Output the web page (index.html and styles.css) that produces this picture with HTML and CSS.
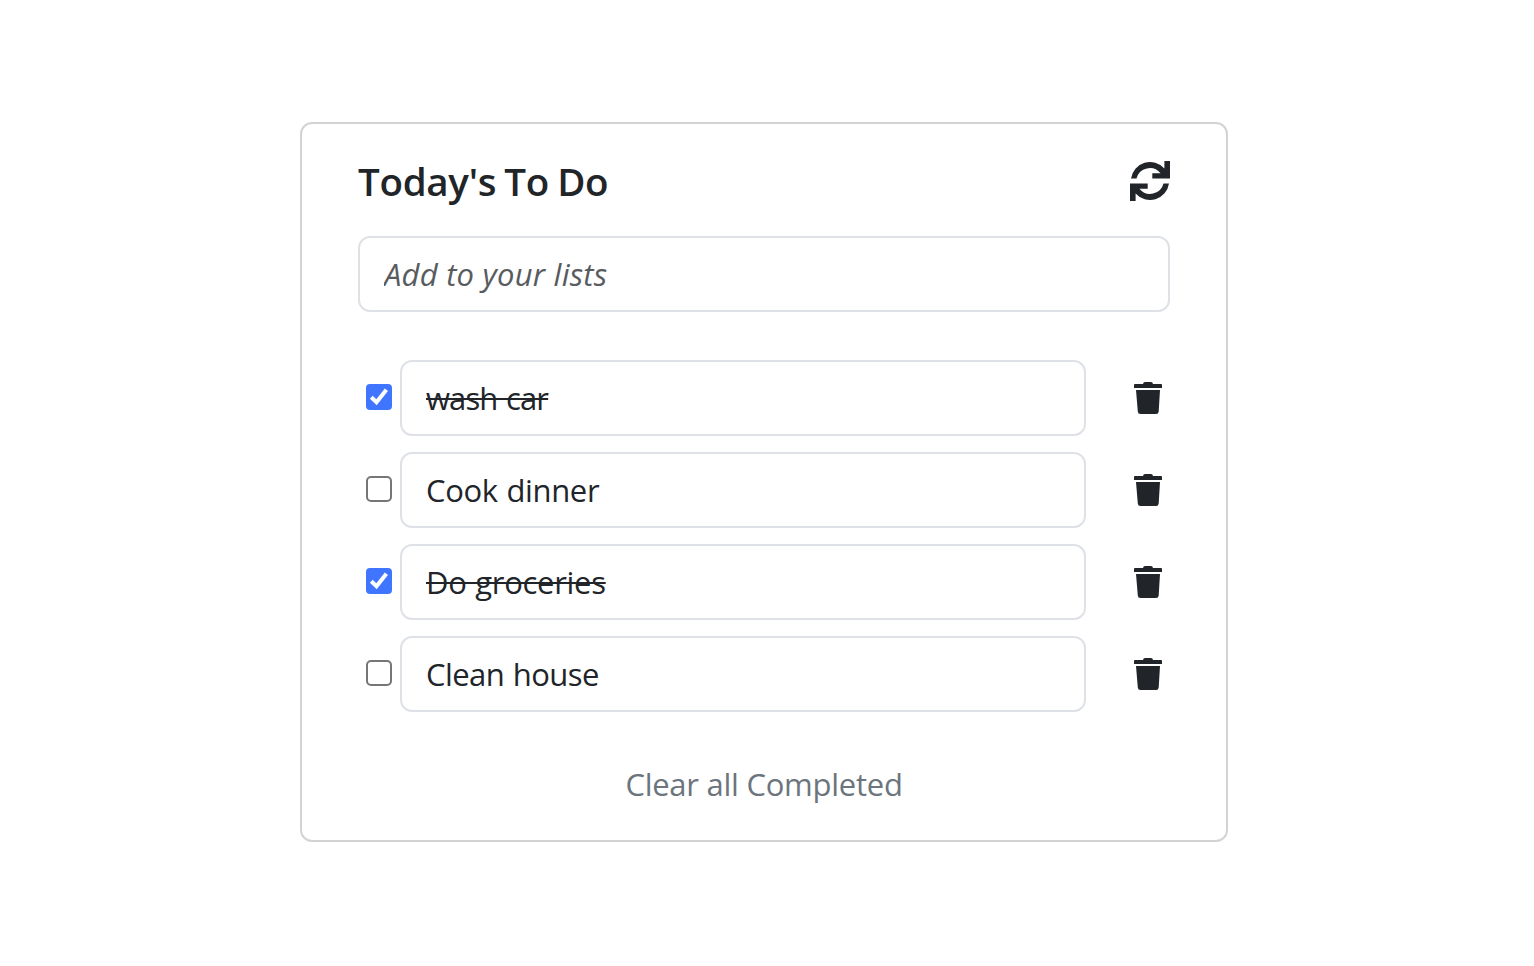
FILE: index.html
```html
<!DOCTYPE html>
<html lang="en">
<head>
<meta charset="utf-8">
<title>Today's To Do</title>
<link rel="stylesheet" href="styles.css">
</head>
<body>
<svg width="0" height="0" class="sprite" aria-hidden="true">
  <symbol id="trash" viewBox="0 0 28 32"><path d="M9 2Q9.300 0 11 0H17Q18.700 0 19 2H27Q28 2 28 3V6H0V3Q0 2 1 2ZM2 8H26L24.700 29.500Q24.500 32 22 32H6.500Q4 32 3.800 29.500Z"/></symbol>
  <symbol id="check" viewBox="0 0 26 26"><path d="M5.300 13.300L10.500 18.300L20.400 5.800"/></symbol>
</svg>
<main class="card">
  <header class="head">
    <h1 class="title">Today's To Do</h1>
    <svg class="refresh" viewBox="0 0 40 40"><path id="arrow" d="M1 17.500A19.200 19.200 0 0 1 34.400 7.500V0H40V17.500H22.300V12.300H30.500A13.700 13.700 0 0 0 6.500 17.500Z"/><use href="#arrow" transform="rotate(180 20 20)"/></svg>
  </header>
  <input class="field add" type="text" placeholder="Add to your lists">
  <ul class="list">
    <li class="row"><span class="check on"><svg><use href="#check"/></svg></span><div class="field item done"><span class="wash">wash car</span></div><svg class="trash"><use href="#trash"/></svg></li>
    <li class="row"><span class="check"></span><div class="field item"><span class="cook">Cook dinner</span></div><svg class="trash"><use href="#trash"/></svg></li>
    <li class="row"><span class="check on"><svg><use href="#check"/></svg></span><div class="field item done"><span class="groceries">Do groceries</span></div><svg class="trash"><use href="#trash"/></svg></li>
    <li class="row"><span class="check"></span><div class="field item"><span class="clean">Clean house</span></div><svg class="trash"><use href="#trash"/></svg></li>
  </ul>
  <button class="clear" type="button">Clear all Completed</button>
</main>
</body>
</html>
```
FILE: styles.css
```css
* { box-sizing: border-box; }
body { margin: 0; padding: 122px 0 0 300px; background: #fff; color: #212529; font-family: "Open Sans", "Noto Sans", sans-serif; font-size: 31px; font-weight: 400; }
.sprite { display: block; }
.card { width: 928px; height: 720px; border: 2px solid #d3d3d3; border-radius: 12px; padding: 34px 56px 0; display: flex; flex-direction: column; }
.head { display: flex; justify-content: space-between; height: 78px; }
.title { margin: 0; font-size: 38.5px; line-height: 46px; font-weight: 600; letter-spacing: -0.3px; word-spacing: -1.5px; white-space: nowrap; }
.refresh { width: 40px; height: 40px; margin-top: 3px; fill: currentColor; }
.field { height: 76px; border: 2px solid #dee2e6; border-radius: 12px; padding: 0 24px; background: #fff; }
.add { width: 812px; font: inherit; font-style: italic; letter-spacing: 0.23px; }
.add::placeholder { color: #595c5f; opacity: 1; }
.list { list-style: none; margin: 48px 0 0; padding: 0 8px; display: flex; flex-direction: column; gap: 16px; }
.row { display: flex; align-items: center; }
.check { width: 26px; height: 26px; border: 2px solid #767676; border-radius: 5px; margin: 0 8px 2px 0; }
.check.on { border: 0; border-radius: 4px; background: #4075ff; }
.check svg { display: block; width: 26px; height: 26px; fill: none; stroke: #fff; stroke-width: 4; }
.item { width: 686px; line-height: 72px; white-space: nowrap; }
.wash { letter-spacing: -0.9px; word-spacing: 1.5px; }
.cook { letter-spacing: -0.35px; word-spacing: 1px; }
.groceries { letter-spacing: -0.3px; word-spacing: 1px; }
.clean { letter-spacing: -0.55px; word-spacing: 1px; }
.done { text-decoration: line-through; text-decoration-thickness: 2px; }
.trash { width: 28px; height: 32px; margin-left: 48px; fill: currentColor; }
.clear { align-self: center; margin-top: 48px; padding: 0; border: 0; background: none; color: #6c757d; font: inherit; letter-spacing: -0.26px; line-height: 48px; }
```
